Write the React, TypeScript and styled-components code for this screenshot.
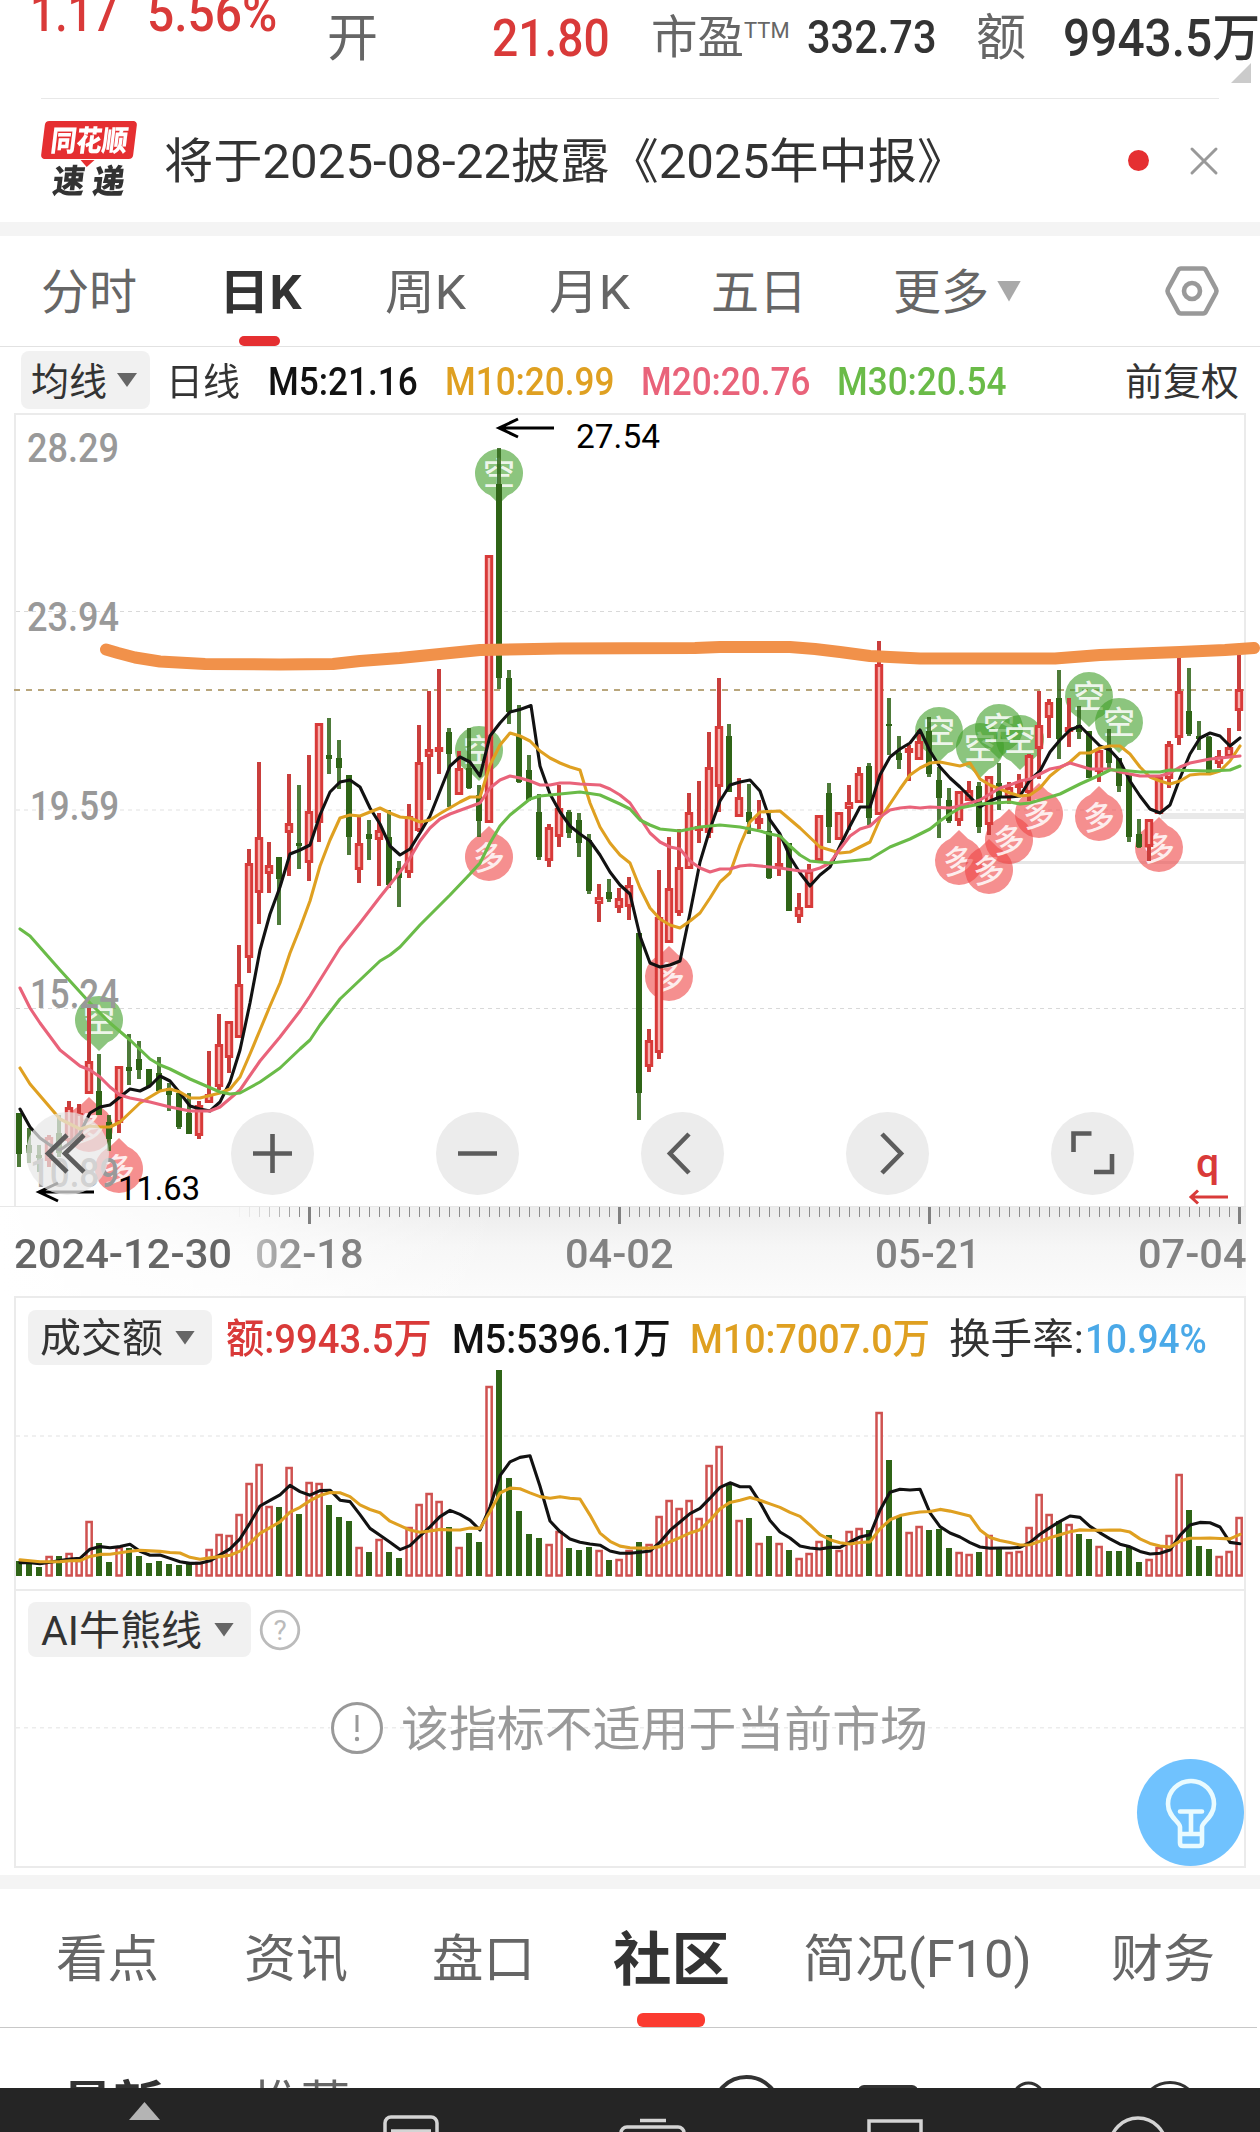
import React, { useLayoutEffect, useRef, useState } from "react"
import styled, { createGlobalStyle } from "styled-components"

const COLORS = {
    red: "#d93a39",
    up: "#d83a39",
    down: "#2f6417",
    ink: "#333333",
    grey: "#666666",
    m5: "#121212",
    m10: "#dfa021",
    m20: "#e9637a",
    m30: "#6abb48",
};

const FONT = `Roboto, "Noto Sans CJK SC", sans-serif`;

const GlobalStyle = createGlobalStyle`
    * {
        box-sizing: border-box;
    }
    body {
        margin: 0;
        background: #fff;
        font-family: ${FONT};
    }
`;

/* ---------- shared parts ---------- */

const FitBox = styled.span<{ $w: number; $ml: number; $size: number; $color: string; $weight: number }>`
    display: block;
    flex: none;
    width: ${(p) => p.$w}px;
    margin-left: ${(p) => p.$ml}px;
    padding-top: 3px;
    font-size: ${(p) => p.$size}px;
    line-height: ${(p) => Math.round(p.$size * 1.2)}px;
    color: ${(p) => p.$color};
    font-weight: ${(p) => p.$weight};
    white-space: nowrap;
`;

const FitInner = styled.span`
    display: inline-block;
    transform-origin: 0 50%;
`;

interface FitProps {
    w: number
    size: number
    ml?: number
    color?: string
    weight?: number
    children: React.ReactNode
}

// narrows or widens its glyphs so that the text fills exactly w pixels
function Fit({ w, size, ml = 0, color = COLORS.ink, weight = 400, children }: FitProps) {
    const ref = useRef<HTMLSpanElement>(null);
    const [scale, setScale] = useState(1);

    useLayoutEffect(() => {
        if (ref.current) setScale(w / ref.current.offsetWidth);
    }, [w]);

    return <FitBox $w={w} $ml={ml} $size={size} $color={color} $weight={weight}>
        <FitInner ref={ref} style={{ transform: `scaleX(${scale})` }}>{children}</FitInner>
    </FitBox>
}

const Caret = styled.i<{ $w: number; $h: number; $color: string; $ml?: number }>`
    flex: none;
    width: ${(p) => p.$w}px;
    height: ${(p) => p.$h}px;
    margin-left: ${(p) => p.$ml || 0}px;
    background: ${(p) => p.$color};
    clip-path: polygon(0 0, 100% 0, 50% 100%);
`;

const Band = styled.div`
    height: 14px;
    background: #f4f4f4;
`;

const BandGap = styled.div`
    height: 7px;
`;

const Page = styled.main`
    width: 1260px;
    height: 2132px;
    overflow: hidden;
    display: flex;
    flex-direction: column;
    background: #fff;

    > * {
        flex: none;
    }
`;

/* ---------- quote header ---------- */

const QuoteRow = styled.header`
    position: relative;
    display: flex;
    align-items: flex-start;
    height: 98px;
`;

const QuoteCell = styled.div<{ $pt: number }>`
    padding-top: ${(p) => p.$pt}px;
`;

const ChangeCell = styled.div`
    display: flex;
    margin-top: -20px;
`;

const Corner = styled.i`
    position: absolute;
    left: 1231px;
    top: 63px;
    width: 20px;
    height: 20px;
    background: #cbcbcb;
    clip-path: polygon(100% 0, 100% 100%, 0 100%);
`;

function Quote() {
    return <QuoteRow>
        <ChangeCell>
            <Fit w={88} size={52} ml={30} color={COLORS.red} weight={500}>1.17</Fit>
            <Fit w={130} size={52} ml={29} color={COLORS.red} weight={500}>5.56%</Fit>
        </ChangeCell>
        <QuoteCell $pt={5}><Fit w={51} size={51} ml={50} color={COLORS.grey}>开</Fit></QuoteCell>
        <QuoteCell $pt={5}><Fit w={118} size={52} ml={114} color={COLORS.red} weight={500}>21.80</Fit></QuoteCell>
        <QuoteCell $pt={7}><Fit w={93} size={46} ml={41} color={COLORS.grey}>市盈</Fit></QuoteCell>
        <QuoteCell $pt={15}><Fit w={46} size={22} color={COLORS.grey}>TTM</Fit></QuoteCell>
        <QuoteCell $pt={7}><Fit w={130} size={46} ml={17} weight={500}>332.73</Fit></QuoteCell>
        <QuoteCell $pt={5}><Fit w={50} size={50} ml={39} color={COLORS.grey}>额</Fit></QuoteCell>
        <QuoteCell $pt={5}><Fit w={197} size={51} ml={37} weight={500}>9943.5万</Fit></QuoteCell>
        <Corner />
    </QuoteRow>
}

/* ---------- notice ---------- */

const NoticeRow = styled.section`
    display: flex;
    align-items: center;
    height: 124px;
    margin: 0 41px;
    border-top: 1px solid #e8e8e8;
`;

const Logo = styled.div`
    display: flex;
    flex-direction: column;
    align-items: center;
    width: 98px;
    height: 80px;
    margin-top: 1px;
    padding-left: 1px;
`;

const LogoTop = styled.div`
    position: relative;
    display: flex;
    justify-content: center;
    width: 92px;
    height: 40px;
    border-radius: 4px;
    background: #e52f31;
    transform: skewX(-7deg);

    &::after {
        content: "";
        position: absolute;
        left: 40px;
        top: 39px;
        border: 7px solid transparent;
        border-top-color: #e52f31;
        border-bottom: 0;
    }
`;

const LogoBottom = styled.div`
    display: flex;
    transform: skewX(-7deg);
`;

const DotGroup = styled.div`
    display: flex;
    align-items: center;
    margin-left: 162px;
`;

const Dot = styled.i`
    flex: none;
    width: 21px;
    height: 21px;
    border-radius: 50%;
    background: #e52f31;
`;

const CloseIcon = styled.svg`
    flex: none;
    width: 30px;
    height: 30px;
    margin-left: 40px;
`;

function Notice() {
    return <NoticeRow>
        <Logo>
            <LogoTop><Fit w={77} size={29} color="#fff" weight={900}>同花顺</Fit></LogoTop>
            <LogoBottom><Fit w={72} size={33} weight={900}>速 递</Fit></LogoBottom>
        </Logo>
        <Fit w={802} size={48} ml={28}>将于2025-08-22披露《2025年中报》</Fit>
        <DotGroup>
            <Dot />
            <CloseIcon viewBox="0 0 30 30">
                <path d="M3 3L27 27M27 3L3 27" stroke="#999" strokeWidth="3" strokeLinecap="round" />
            </CloseIcon>
        </DotGroup>
    </NoticeRow>
}

/* ---------- period tabs ---------- */

const PeriodTabs = styled.nav`
    display: flex;
    align-items: center;
    height: 111px;
    padding-left: 41px;
    border-bottom: 1px solid #e2e2e2;
`;

const Tab = styled.div<{ $ml: number; $bar?: number; $barColor?: string; $barH?: number }>`
    position: relative;
    display: flex;
    align-items: center;
    align-self: stretch;
    justify-content: center;
    margin-left: ${(p) => p.$ml}px;

    &::after {
        content: "";
        position: absolute;
        bottom: 0;
        left: 50%;
        width: ${(p) => p.$bar || 0}px;
        height: ${(p) => p.$barH || 10}px;
        margin-left: ${(p) => -(p.$bar || 0) / 2 - 1}px;
        border-radius: 6px;
        background: ${(p) => p.$barColor || "#e52f31"};
    }
`;

const HexIcon = styled.svg`
    width: 56px;
    height: 54px;
    margin-left: 143px;
`;

function Periods() {
    return <PeriodTabs>
        <Tab $ml={0}><Fit w={96} size={48} color={COLORS.grey}>分时</Fit></Tab>
        <Tab $ml={82} $bar={41}><Fit w={83} size={48} weight={700}>日K</Fit></Tab>
        <Tab $ml={83}><Fit w={81} size={48} color={COLORS.grey}>周K</Fit></Tab>
        <Tab $ml={83}><Fit w={81} size={48} color={COLORS.grey}>月K</Fit></Tab>
        <Tab $ml={81}><Fit w={96} size={48} color={COLORS.grey}>五日</Fit></Tab>
        <Tab $ml={86}><Fit w={96} size={48} color={COLORS.grey}>更多</Fit></Tab>
        <Caret $w={24} $h={21} $color="#a9a9a9" $ml={8} />
        <HexIcon viewBox="0 0 56 54" fill="none" stroke="#999" strokeWidth="4.6" strokeLinejoin="round">
            <path d="M17 4.5H39Q41 4.5 42 6.5L52 25Q53 27 52 29L42 47.5Q41 49.5 39 49.5H17Q15 49.5 14 47.5L4 29Q3 27 4 25L14 6.5Q15 4.5 17 4.5Z" />
            <circle cx="28" cy="27" r="8" />
        </HexIcon>
    </PeriodTabs>
}

/* ---------- price chart ---------- */

const MaRow = styled.div`
    display: flex;
    align-items: center;
    height: 66px;
    padding-left: 21px;
`;

const Picker = styled.button<{ $w: number; $h: number; $pl: number }>`
    display: flex;
    align-items: center;
    flex: none;
    width: ${(p) => p.$w}px;
    height: ${(p) => p.$h}px;
    padding: 0 0 0 ${(p) => p.$pl}px;
    border: 0;
    border-radius: 8px;
    background: #f1f1f1;
    font-family: inherit;
    text-align: left;
`;

const PriceArea = styled.section`
    position: relative;
    height: 793px;
`;

const Drawing = styled.svg`
    display: block;
    font-family: ${FONT};
`;

// [rising, high, body top, body bottom, low], all on the chart's vertical scale
const CANDLES: number[][] = [
    [0, 1113, 1113, 1154, 1167], [0, 1128, 1145, 1153, 1163], [0, 1145, 1155, 1158, 1172], [1, 1135, 1137, 1160, 1167],
    [0, 1115, 1133, 1153, 1157], [1, 1101, 1107, 1140, 1145], [1, 1104, 1113, 1140, 1140], [1, 1008, 1061, 1093, 1093],
    [0, 1054, 1091, 1115, 1115], [0, 1115, 1122, 1139, 1151], [1, 1066, 1066, 1122, 1133], [0, 1034, 1067, 1071, 1085],
    [0, 1041, 1059, 1070, 1079], [0, 1069, 1069, 1086, 1086], [0, 1057, 1073, 1091, 1091], [0, 1083, 1088, 1095, 1111],
    [0, 1093, 1093, 1127, 1129], [0, 1093, 1113, 1134, 1134], [1, 1101, 1105, 1135, 1139], [1, 1051, 1094, 1102, 1102],
    [1, 1014, 1044, 1086, 1090], [1, 1021, 1021, 1057, 1073], [1, 945, 984, 1037, 1037], [1, 849, 863, 957, 973],
    [1, 762, 837, 892, 924], [1, 842, 865, 873, 893], [0, 857, 857, 879, 925], [1, 774, 823, 832, 876],
    [0, 785, 843, 846, 869], [1, 755, 811, 862, 881], [1, 723, 723, 822, 842], [0, 718, 755, 759, 774],
    [0, 740, 758, 768, 789], [0, 775, 775, 837, 855], [1, 817, 843, 869, 883], [0, 820, 834, 839, 860],
    [1, 813, 830, 839, 886], [0, 810, 837, 885, 888], [0, 861, 868, 878, 907], [1, 804, 816, 872, 878],
    [1, 725, 762, 830, 832], [1, 691, 749, 756, 800], [1, 669, 747, 751, 774], [0, 728, 732, 754, 807],
    [1, 751, 768, 794, 794], [0, 728, 768, 788, 789], [0, 785, 795, 821, 837], [1, 555, 555, 822, 822],
    [0, 448, 484, 678, 689], [0, 670, 678, 712, 724], [0, 705, 736, 782, 783], [0, 755, 770, 800, 801],
    [0, 794, 812, 857, 860], [1, 824, 827, 860, 867], [1, 785, 808, 836, 847], [0, 810, 812, 833, 838],
    [0, 813, 820, 843, 857], [0, 834, 840, 891, 894], [1, 884, 897, 903, 922], [0, 879, 892, 899, 902],
    [1, 888, 898, 907, 913], [1, 877, 885, 906, 920], [0, 933, 933, 1093, 1120], [1, 1029, 1040, 1066, 1072],
    [1, 870, 917, 1052, 1059], [1, 837, 888, 942, 942], [1, 829, 867, 912, 916], [1, 793, 812, 868, 868],
    [1, 781, 826, 829, 843], [1, 732, 767, 832, 838], [1, 678, 726, 786, 812], [0, 724, 736, 792, 792],
    [1, 778, 797, 816, 816], [0, 784, 812, 822, 834], [1, 800, 818, 823, 829], [0, 813, 831, 878, 879],
    [1, 835, 863, 866, 876], [0, 843, 843, 911, 911], [1, 893, 907, 916, 923], [1, 864, 871, 907, 907],
    [1, 815, 815, 860, 860], [0, 783, 793, 827, 843], [1, 812, 812, 839, 839], [1, 785, 802, 808, 830],
    [1, 767, 773, 802, 802], [0, 763, 766, 818, 825], [1, 641, 664, 814, 814], [0, 698, 724, 726, 755],
    [0, 736, 753, 760, 769], [1, 745, 748, 752, 781], [1, 730, 741, 759, 759], [0, 717, 731, 774, 777],
    [0, 767, 780, 798, 838], [0, 788, 800, 821, 823], [1, 791, 791, 820, 826], [1, 781, 790, 800, 800],
    [0, 782, 786, 827, 833], [1, 776, 776, 824, 835], [0, 763, 783, 798, 810], [1, 782, 787, 797, 804],
    [1, 774, 782, 787, 796], [1, 754, 755, 792, 801], [1, 691, 725, 748, 779], [1, 699, 702, 717, 738],
    [0, 670, 698, 739, 759], [1, 698, 727, 731, 747], [0, 706, 725, 732, 739], [0, 731, 731, 778, 778],
    [1, 750, 750, 771, 782], [0, 729, 748, 763, 768], [0, 758, 758, 786, 792], [0, 773, 773, 837, 842],
    [0, 819, 834, 847, 848], [1, 819, 819, 846, 861], [1, 777, 777, 813, 813], [1, 741, 744, 778, 788],
    [1, 657, 691, 737, 745], [0, 668, 711, 734, 736], [0, 721, 736, 739, 750], [0, 736, 737, 773, 773],
    [1, 750, 756, 763, 768], [1, 728, 747, 756, 756], [1, 655, 689, 710, 731],
];

const M5_LINE = "19,1109 29,1127 39,1138 49,1145 59,1150 69,1143 79,1133 89,1113 99,1107 109,1105 119,1097 129,1089 139,1091 149,1086 159,1076 169,1081 179,1093 189,1106 199,1109 209,1111 219,1102 229,1082 239,1050 249,1003 259,950 269,914 279,887 289,854 299,850 309,845 319,815 329,792 339,782 349,780 359,787 369,808 379,824 389,846 399,855 409,849 419,833 429,816 439,791 449,766 459,757 469,762 479,776 489,736 499,723 509,712 519,709.5 530,705.5 539,766 549,794 559,812 569,826 579,834 589,841 599,855 609,872 619,885 629,894 639,936 649,963 659,967 669,965 679,961 689,913 699,862 709,829 719,801 729,785 739,782 749,780 759,791 769,820 779,834 789,857 799,873 809,886 819,875 829,867 839,846 849,826 859,807 869,807 879,775 889,757 899,749 909,743 919,730 929,751 939,767 949,778 959,787 969,797 979,807 989,801 999,797 1009,797 1019,796 1029,780 1039,771 1049,752 1059,740 1069,730 1079,726 1089,736 1099,746 1109,750 1119,761 1129,781 1139,796 1149,809 1159,813 1169,805 1179,778 1189,754 1199,738 1209,733 1219,736 1229,746 1239,738";
const M10_LINE = "19,1068 29,1084 59,1119 79,1129 89,1126 99,1127 109,1127 119,1122 139,1103 159,1091 169,1089 179,1092 189,1098 199,1098 219,1093 229,1089 239,1077 249,1054 259,1030 269,1006 279,983 289,953 299,928 309,901 319,866 329,840 339,818 349,815 359,816 369,812 379,808 389,813 399,817 409,818 419,822 429,820 440,813 459,802 469,797 479,797 489,765 499,745 509,733 519,736 529,741 539,751 549,758 559,763 569,767 579,770 589,803 599,827 609,843 619,855 629,863 639,888 649,908 659,919 669,925 679,928 689,921 699,913 709,898 719,882 729,873 739,845 749,822 759,812 779,811 799,828 819,847 829,850 839,853 849,852 859,847 869,842 879,819 889,804 899,789 909,775 919,768 929,763 939,762 959,766 969,763 979,779 989,785 1009,793 1019,796 1029,795 1039,788 1049,776 1059,768 1069,762 1079,753 1089,753 1099,748 1109,746 1119,746 1129,754 1139,767 1149,777 1159,781 1169,784 1179,781 1189,775 1199,774 1209,774 1219,771 1229,761 1239,746";
const M20_LINE = "19,988 29,1008 39,1023 59,1050 79,1066 89,1070 99,1077 109,1087 119,1095 129,1098 149,1102 169,1107 189,1111 209,1111 219,1107 239,1090 259,1061 279,1037 299,1011 309,996 319,980 339,948 359,923 379,897 399,872 409,858 419,841 429,828 439,819 449,814 479,803 489,788 499,780 509,776 519,778 529,781 539,785 549,785 559,783 569,783 579,784 599,785 609,789 619,795 629,803 639,818 649,833 659,842 669,847 679,849 689,861 699,868 709,872 719,869 729,869 739,866 749,865 779,868 799,871 809,871 819,868 829,863 839,849 849,836 859,829 869,826 879,817 889,810 899,808 909,807 919,808 929,807 949,808 959,806 979,800 999,788 1009,785 1019,781 1029,779 1049,769 1059,767 1069,763 1079,766 1089,769 1109,769 1119,772 1139,776 1159,776 1169,773 1179,767 1189,763 1199,761 1209,759 1239,756";
const M30_LINE = "19,929 29,936 59,970 79,992 89,1003 109,1023 129,1040 149,1059 159,1065 169,1069 189,1079 219,1092 229,1094 239,1093 259,1082 279,1068 299,1049 309,1040 319,1025 339,999 359,980 379,961 389,955 399,947 409,936 419,925 449,895 469,874 479,863 489,843 499,826 509,815 529,799 539,796 549,795 579,792 599,795 619,804 629,809 639,820 649,825 659,829 679,831 699,827 719,825 739,827 759,831 769,834 779,836 789,846 799,855 809,861 819,862 829,863 849,861 869,859 889,847 909,839 929,829 939,821 949,814 959,808 979,804 1009,802 1019,804 1029,803 1059,794 1079,784 1099,775 1109,770 1119,770 1139,772 1159,772 1169,770 1209,771 1229,770 1239,766";
const PEN_LINE = "106,649.5 118,653 135,657.5 160,661.5 205,664 280,664.5 333,664 360,661 400,658 420,656 480,650 560,648.5 695,648 720,647 790,647 815,649 840,652 870,656 920,658.5 1055,658.5 1100,655 1180,652 1225,650 1254,648";

const SHORTS = [[99, 1020], [479, 750], [499, 473], [939, 731], [980, 747], [999, 728], [1020, 739], [1089, 696], [1119, 722]];
const LONGS = [[89, 1128], [119, 1169], [489, 857], [669, 977], [959, 861], [989, 870], [1009, 840], [1039, 814], [1099, 817], [1159, 848]];

const PRICE_LABELS: [string, number, number, number][] = [
    ["28.29", 27, 462, 92], ["23.94", 27, 631, 92], ["19.59", 30, 820, 89], ["15.24", 30, 1008, 89], ["10.89", 30, 1187, 89],
];

const cx = (i: number) => 19 + i * 10;

function Signal({ x, y, long }: { x: number; y: number; long?: boolean }) {
    const d = long
        ? `M${x} ${y - 31}L${x + 9} ${y - 22.3}A24 24 0 1 1 ${x - 9} ${y - 22.3}Z`
        : `M${x} ${y + 31}L${x + 9} ${y + 22.3}A24 24 0 1 0 ${x - 9} ${y + 22.3}Z`;
    return <g>
        <path d={d} fill={long ? "#ef4444" : "#3f9f28"} fillOpacity={0.6} />
        <text x={x} y={y + 12} fontSize="32" fontWeight="500" fill="#fff" fillOpacity="0.85" textAnchor="middle" transform={long ? `rotate(-6 ${x} ${y})` : undefined}>
            {long ? "多" : "空"}
        </text>
    </g>
}

function Candle({ data, x }: { data: number[]; x: number }) {
    const [up, high, top, bottom, low] = data;
    if (!up) {
        return <g fill={COLORS.down}>
            <rect x={x - 2} y={high} width={4} height={low - high} fillOpacity={0.85} />
            <rect x={x - 3} y={top} width={6} height={bottom - top} />
        </g>
    }
    return <g>
        <path d={`M${x} ${high}V${top}M${x} ${bottom}V${low}`} stroke="#c93e3c" strokeWidth="4" />
        <rect x={x - 2.7} y={top + 1.5} width={5.4} height={Math.max(bottom - top - 2, 2)} fill="#f8b0ae" stroke={COLORS.up} strokeWidth={3} />
    </g>
}

function PriceDrawing() {
    return <Drawing width="1260" height="793" viewBox="0 413 1260 793">
        <path d="M15 1206V414H1245V1206" fill="none" stroke="#ebebeb" strokeWidth="2" />
        <path d="M16 611.5H1244M16 1008.5H1244" stroke="#d9d9d9" strokeDasharray="4 4" />
        <path d="M16 810H1244" stroke="#ececec" strokeWidth="1.6" strokeDasharray="4 4" />
        <path d="M14 690H1244" stroke="#b9a67c" strokeWidth="2" strokeDasharray="6 6" />
        <path d="M1161 816H1246" stroke="#e9e9e9" strokeWidth="6" />
        <path d="M960 862.5H1246" stroke="#e6e6e6" strokeWidth="3" />
        {SHORTS.map(([x, y]) => <Signal key={`s${x}`} x={x} y={y} />)}
        {LONGS.map(([x, y]) => <Signal key={`l${x}`} x={x} y={y} long />)}
        {CANDLES.map((c, i) => <Candle key={i} data={c} x={cx(i)} />)}
        <g fill="none" strokeWidth="3.1" strokeLinejoin="round" strokeLinecap="round">
            <polyline points={M5_LINE} stroke={COLORS.m5} transform="translate(1 0)" />
            <polyline points={M10_LINE} stroke={COLORS.m10} transform="translate(1 0)" />
            <polyline points={M20_LINE} stroke={COLORS.m20} transform="translate(1 0)" />
            <polyline points={M30_LINE} stroke={COLORS.m30} transform="translate(1 0)" />
        </g>
        {PRICE_LABELS.map(([label, x, y, w]) => (
            <text key={label} x={x} y={y} fontSize="40.5" fontWeight="500" fill="#999" textLength={w} lengthAdjust="spacingAndGlyphs">{label}</text>
        ))}
        <g fill="none" stroke="#000" strokeWidth="3">
            <path d="M554 428H499M518 419L499 428L518 437" />
            <path d="M94 1192H39M58 1183L39 1192L58 1201" />
        </g>
        <text x="576" y="448" fontSize="34" fill="#000" textLength="84" lengthAdjust="spacingAndGlyphs">27.54</text>
        <text x="118" y="1200" fontSize="34" fill="#000" textLength="82" lengthAdjust="spacingAndGlyphs">11.63</text>
        <text x="1196" y="1177" fontSize="41" fontWeight="500" fill={COLORS.red}>q</text>
        <path d="M1228 1197H1191M1198 1190.5L1191 1197L1198 1203.5" fill="none" stroke={COLORS.red} strokeWidth="3" />
        <polyline points={PEN_LINE} fill="none" stroke="#f1914a" strokeWidth="12" strokeLinecap="round" strokeLinejoin="round" />
    </Drawing>
}

const ChartTools = styled.div`
    position: absolute;
    left: 26px;
    top: 699px;
    display: flex;
    gap: 122px;
`;

const ToolButton = styled.button<{ $faded?: boolean }>`
    width: 83px;
    height: 83px;
    padding: 0;
    border: 0;
    border-radius: 50%;
    background: ${(p) => (p.$faded ? "rgba(232, 232, 232, 0.72)" : "#ececec")};

    svg {
        display: block;
        width: 100%;
        height: 100%;
        fill: none;
        stroke: #5c5c5c;
        stroke-width: 4.6;
    }
`;

const TOOLS = [
    "M41 23L22 41.5L41 60M58 23L39 41.5L58 60",
    "M22 41.5H61M41.5 22V61",
    "M22 41.5H61",
    "M48 22L29 41.5L48 61",
    "M36 22L55 41.5L36 61",
    "M22.5 40V21.5H40.5M43 60H61V42",
];

const Axis = styled.div`
    height: 90px;
    margin-right: 14px;
    border-top: 1px solid #e8e8e8;
    background: linear-gradient(90deg, #fff 0, #ffffffa0 240px, transparent 500px), linear-gradient(#ececec, #f6f6f6 45%, #fbfbfb);
`;

const Dates = styled.div`
    display: flex;
    align-items: center;
    height: 56px;
    margin-top: -4px;
`;

const FadedDate = styled.div`
    mask-image: linear-gradient(90deg, rgba(0, 0, 0, 0.35), #000 60%);
`;

function DateAxis() {
    const ticks = Array.from({ length: 101 }, (_, k) => 239.5 + k * 10);
    return <Axis>
        <Drawing width="1246" height="22" viewBox="0 1207 1246 22">
            {ticks.map((x, k) => {
                const major = (k - 7) % 31 === 0;
                return <rect key={x} x={major ? x - 1.5 : x - 0.5} y="1207" width={major ? 3 : 1} height={major ? 17 : 10}
                    fill={major ? "#808080" : "#8c8c8c"} opacity={Math.min(1, ((k + 1) / 7) ** 1.5)} />
            })}
        </Drawing>
        <Dates>
            <Fit w={218} size={40} ml={14} color={COLORS.grey} weight={500}>2024-12-30</Fit>
            <FadedDate><Fit w={109} size={40} ml={23} color="#828282" weight={500}>02-18</Fit></FadedDate>
            <Fit w={109} size={40} ml={201} color="#828282" weight={500}>04-02</Fit>
            <Fit w={106} size={40} ml={201} color="#828282" weight={500}>05-21</Fit>
            <Fit w={109} size={40} ml={157} color="#828282" weight={500}>07-04</Fit>
        </Dates>
    </Axis>
}

/* ---------- turnover ---------- */

const Panel = styled.section<{ $h: number; $closed?: boolean }>`
    position: relative;
    height: ${(p) => p.$h}px;
    margin: 0 14px;
    border: 2px solid #ebebeb;
    border-bottom-width: ${(p) => (p.$closed ? 2 : 0)}px;
`;

const PanelHead = styled.div<{ $mt: number }>`
    display: flex;
    align-items: center;
    height: 55px;
    margin: ${(p) => p.$mt}px 0 0 12px;
`;

const TURNOVER = [
    15, 13, 9, 20, 20, 23, 16, 55, 33, 14, 29, 28, 20, 13, 15, 12, 11, 12, 14, 27, 42, 41, 62, 93, 112, 70, 69, 109, 62, 94, 93,
    71, 59, 55, 29, 24, 37, 24, 18, 49, 72, 83, 75, 49, 29, 43, 34, 190, 206, 98, 65, 42, 38, 32, 45, 28, 26, 29, 26, 16, 17, 26,
    34, 32, 60, 76, 68, 76, 58, 111, 130, 91, 56, 58, 33, 40, 33, 26, 18, 23, 35, 41, 26, 45, 48, 46, 164, 116, 60, 44, 50, 46,
    47, 28, 24, 22, 24, 41, 29, 24, 25, 49, 82, 62, 55, 52, 42, 37, 30, 25, 25, 29, 14, 17, 29, 41, 102, 66, 30, 27, 20, 25, 59,
];

// a few earlier sessions, so that the averages start at the left edge
const EARLIER = [21, 20, 19, 19, 15, 14, 13, 13, 12];

function average(days: number) {
    const all = [...EARLIER, ...TURNOVER];
    return TURNOVER.map((_, i) => {
        const end = i + EARLIER.length + 1;
        const sum = all.slice(end - days, end).reduce((a, b) => a + b, 0);
        return `${cx(i) + 1},${1576 - sum / days}`;
    }).join(" ");
}

function TurnoverDrawing() {
    return <Drawing width="1228" height="212" viewBox="16 1365 1228 212">
        <path d="M16 1436H1244" stroke="#ececec" strokeWidth="1.5" strokeDasharray="4 4" />
        {TURNOVER.map((h, i) => CANDLES[i][0]
            ? <rect key={i} x={cx(i) - 2.5} y={1577 - h} width={5.2} height={h - 1.5} fill="#fff" stroke="#cf5250" strokeWidth="2.5" />
            : <rect key={i} x={cx(i) - 3} y={1576 - h} width={6} height={h} fill={COLORS.down} />)}
        <g fill="none" strokeWidth="3.1" strokeLinejoin="round" strokeLinecap="round">
            <polyline points={average(5)} stroke={COLORS.m5} />
            <polyline points={average(10)} stroke={COLORS.m10} />
        </g>
    </Drawing>
}

/* ---------- AI indicator ---------- */

const HelpIcon = styled.svg`
    width: 42px;
    height: 42px;
    margin-left: 8px;
    font-family: ${FONT};
`;

const Message = styled.div`
    display: flex;
    align-items: center;
    height: 60px;
    margin-top: 41px;
    padding-left: 314px;
    background: repeating-linear-gradient(90deg, #ececec 0 4px, transparent 4px 8px) 0 29px / 100% 1.5px no-repeat;
`;

const AlertIcon = styled.svg`
    width: 54px;
    height: 54px;
    background: #fff;
`;

const TipButton = styled.button`
    position: absolute;
    right: 0;
    bottom: 0;
    width: 107px;
    height: 107px;
    padding: 0;
    border: 0;
    border-radius: 50%;
    background: #70c2fe;

    svg {
        display: block;
    }
`;

/* ---------- lower tabs ---------- */

const SectionTabs = styled.nav`
    display: flex;
    align-items: center;
    height: 139px;
    margin-right: 3px;
    padding-left: 56px;
    border-bottom: 1px solid #c8c8c8;
`;

const SubRow = styled.div`
    display: flex;
    height: 60px;
    overflow: hidden;
`;

const SubLabels = styled.div`
    display: flex;
    width: 630px;
    padding-top: 44px;
`;

const BottomBar = styled.footer`
    height: 44px;
    background: #252525;
`;

export default function App() {
    return <>
        <GlobalStyle />
        <Page>
            <Quote />
            <Notice />
            <Band />
            <Periods />
            <MaRow>
                <Picker $w={129} $h={58} $pl={10}>
                    <Fit w={76} size={38}>均线</Fit>
                    <Caret $w={20} $h={14} $color="#666" $ml={10} />
                </Picker>
                <Fit w={74} size={38} ml={16}>日线</Fit>
                <Fit w={150} size={38} ml={28} color={COLORS.m5} weight={500}>M5:21.16</Fit>
                <Fit w={169} size={38} ml={27} color={COLORS.m10} weight={500}>M10:20.99</Fit>
                <Fit w={169} size={38} ml={27} color={COLORS.m20} weight={500}>M20:20.76</Fit>
                <Fit w={169} size={38} ml={27} color={COLORS.m30} weight={500}>M30:20.54</Fit>
                <Fit w={114} size={38} ml={119}>前复权</Fit>
            </MaRow>
            <PriceArea>
                <PriceDrawing />
                <ChartTools>
                    {TOOLS.map((d, i) => <ToolButton key={d} $faded={i === 0}>
                        <svg viewBox="0 0 83 83"><path d={d} /></svg>
                    </ToolButton>)}
                </ChartTools>
            </PriceArea>
            <DateAxis />
            <Panel $h={293}>
                <PanelHead $mt={12}>
                    <Picker $w={184} $h={55} $pl={12}>
                        <Fit w={123} size={40}>成交额</Fit>
                        <Caret $w={20} $h={14} $color="#666" $ml={12} />
                    </Picker>
                    <Fit w={206} size={41} ml={14} color={COLORS.red} weight={500}>额:9943.5万</Fit>
                    <Fit w={219} size={41} ml={20} color={COLORS.m5} weight={500}>M5:5396.1万</Fit>
                    <Fit w={240} size={41} ml={19} color={COLORS.m10} weight={500}>M10:7007.0万</Fit>
                    <Fit w={135} size={41} ml={19}>换手率:</Fit>
                    <Fit w={122} size={41} ml={1} color="#4aa9e8" weight={500}>10.94%</Fit>
                </PanelHead>
                <TurnoverDrawing />
            </Panel>
            <Panel $h={279} $closed>
                <PanelHead $mt={11}>
                    <Picker $w={223} $h={55} $pl={13}>
                        <Fit w={161} size={41}>AI牛熊线</Fit>
                        <Caret $w={20} $h={14} $color="#666" $ml={12} />
                    </Picker>
                    <HelpIcon viewBox="0 0 42 42">
                        <circle cx="21" cy="21" r="18.8" fill="none" stroke="#bbb" strokeWidth="2.8" />
                        <text x="21" y="30.5" fontSize="28" fill="#bbb" textAnchor="middle">?</text>
                    </HelpIcon>
                </PanelHead>
                <Message>
                    <AlertIcon viewBox="0 0 54 54" fill="none" stroke="#999" strokeWidth="3">
                        <circle cx="27" cy="27" r="24.5" />
                        <path d="M27 14V31" />
                        <circle cx="27" cy="38" r="2.2" fill="#999" stroke="none" />
                    </AlertIcon>
                    <Fit w={527} size={48} ml={17} color="#999">该指标不适用于当前市场</Fit>
                </Message>
                <TipButton>
                    <svg width="107" height="107" viewBox="0 0 107 107" fill="none" stroke="#e9fbff" strokeWidth="4.6" strokeLinejoin="round" strokeLinecap="round">
                        <path d="M43 75V68C43 63 31 58 31 45A23 23 0 0 1 77 45C77 58 65 63 65 68V84Q65 87 62 87H46Q43 87 43 84V75H65M43 52.5H65M54 52.5V75" />
                    </svg>
                </TipButton>
            </Panel>
            <BandGap />
            <Band />
            <SectionTabs>
                <Tab $ml={0}><Fit w={103} size={51} color={COLORS.grey}>看点</Fit></Tab>
                <Tab $ml={85}><Fit w={104} size={51} color={COLORS.grey}>资讯</Fit></Tab>
                <Tab $ml={84}><Fit w={103} size={51} color={COLORS.grey}>盘口</Fit></Tab>
                <Tab $ml={78} $bar={68} $barH={14} $barColor="#fb3b30"><Fit w={117} size={58} weight={700}>社区</Fit></Tab>
                <Tab $ml={73}><Fit w={229} size={51} color={COLORS.grey}>简况(F10)</Fit></Tab>
                <Tab $ml={79}><Fit w={104} size={51} color={COLORS.grey}>财务</Fit></Tab>
            </SectionTabs>
            <SubRow>
                <SubLabels>
                    <Fit w={102} size={50} ml={62} weight={700}>最新</Fit>
                    <Fit w={98} size={48} ml={88} color={COLORS.grey}>推荐</Fit>
                </SubLabels>
                <svg width="630" height="60" viewBox="630 2028 630 60" fill="none" stroke="#333" strokeWidth="4">
                    <circle cx="746.5" cy="2110" r="33" />
                    <rect x="860" y="2087" width="56" height="40" rx="4" />
                    <circle cx="1028.5" cy="2098" r="15" strokeWidth="3" />
                    <circle cx="1170" cy="2111" r="28.5" strokeWidth="3" />
                </svg>
            </SubRow>
            <BottomBar>
                <svg width="1260" height="44" viewBox="0 2088 1260 44" fill="none" stroke="#d4d4d4" strokeWidth="3.5">
                    <path d="M144.500 2102L160 2120H129Z" fill="#b4b4b4" stroke="none" />
                    <rect x="385" y="2117" width="52" height="50" rx="6" />
                    <path d="M391 2131H431" />
                    <path d="M640 2120.500H666" />
                    <rect x="621" y="2127" width="63" height="40" rx="6" />
                    <rect x="869" y="2121" width="52" height="40" />
                    <circle cx="1138" cy="2146" r="28" />
                </svg>
            </BottomBar>
        </Page>
    </>
}
